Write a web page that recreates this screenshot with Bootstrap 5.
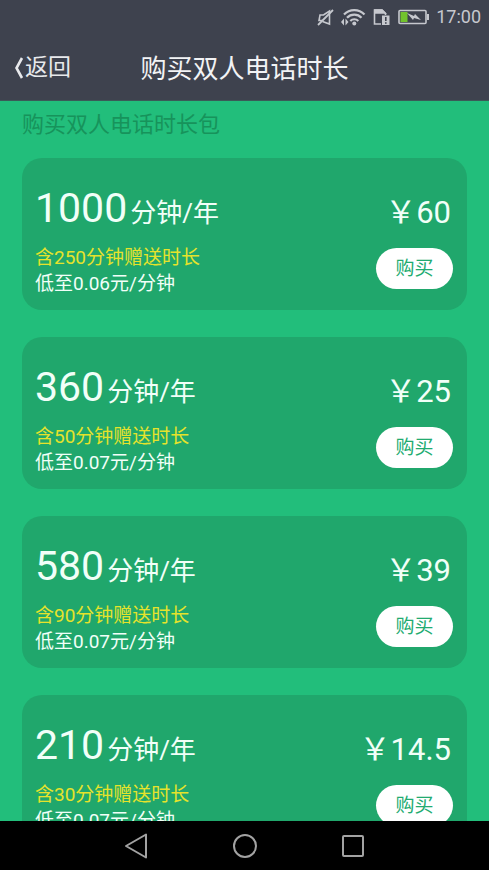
<!DOCTYPE html>
<html lang="zh-CN">
<head>
<meta charset="utf-8">
<meta name="viewport" content="width=device-width, initial-scale=1">
<title>购买双人电话时长</title>
<link rel="stylesheet" href="https://cdn.jsdelivr.net/npm/bootstrap@5.3.0/dist/css/bootstrap.min.css">
<style>
body { font-family: Roboto, "Noto Sans CJK SC", sans-serif; background: #22be7b; }
.topbar { background: #3e424e; color: #f2f3f5; border-bottom: 1px solid #3b5a58; }
.status { height: 34px; padding: 0 8px; gap: 7px; color: #c6c8ce; font-size: 18px; line-height: 34px; }
.titlebar { height: 66px; padding: 4px 14px 0; }
.titlebar .side { flex: 1 1 0; }
.back-link { font-size: 23px; line-height: 32px; color: #e8e9ec; }
.page-title { font-size: 26px; line-height: 36px; font-weight: 400; }
.plans { min-height: 0; padding: 0 22px; }
.section-title { font-size: 22px; line-height: 32px; margin: 8px 0 17px; color: #17935b; font-weight: 400; }
.plan-list { gap: 27px; }
.plan { height: 152px; flex: none; border-radius: 20px; background: #20a76c; color: #f1fff8; padding: 23px 14px 0 13px; }
.amount { font-size: 41px; line-height: 54px; }
.unit { font-size: 26px; margin-left: 3px; }
.cost { font-size: 31px; line-height: 54px; padding: 5px 2px 0 0; }
.detail { font-size: 19px; line-height: 26px; padding-top: 1px; }
.bonus { color: #e6e32b; }
.buy { width: 77px; height: 41px; background: #fff; color: #22ab70; font-size: 19px; line-height: 26px; padding: 0; }
.buy:hover { background: #effff7; color: #178a58; }
.sysnav { height: 49px; background: #000; gap: 80px; }
.sysnav button { width: 28px; height: 28px; }
</style>
<script src="https://cdn.jsdelivr.net/npm/bootstrap@5.3.0/dist/js/bootstrap.bundle.min.js"></script>
</head>
<body>
<div class="d-flex flex-column vh-100 overflow-hidden">
  <header class="topbar flex-shrink-0">
    <div class="status d-flex align-items-center justify-content-end">
      <svg width="17" height="18" viewBox="0 0 17 18" fill="none" stroke="currentColor" stroke-width="1.600" aria-hidden="true"><path d="M5.500 13.500 12.500 16V3L6.500 7H3L2 12.500h3.500"/><path d="M1 17 16 2" stroke-width="1.800"/></svg>
      <svg width="25" height="18" viewBox="0 0 25 18" fill="none" stroke="currentColor" stroke-width="2.200" aria-hidden="true"><path d="M3 6.500a14 14 0 0 1 20.500 0M6 9.800a10 10 0 0 1 14.500 0M9.300 13a5.500 5.500 0 0 1 8 0"/><circle cx="13.300" cy="15.500" r="2" fill="currentColor" stroke="none"/><path d="M0 14 3 10.500v7zM7.500 14 4.500 10.500v7z" fill="currentColor" stroke="none"/></svg>
      <svg width="18" height="18" viewBox="0 0 18 18" fill="none" stroke="currentColor" stroke-width="1.600" aria-hidden="true"><path d="M8 16H1.500V2H9l3.500 3.500V7"/><path d="M2 2h7l3 3H2z" fill="currentColor"/><path d="M9 7.500h7.500V17H9z" fill="currentColor" stroke="none"/><path d="M12.800 9v4m0 1.200v1.600" stroke="#3e424e"/></svg>
      <svg width="31" height="16" viewBox="0 0 31 16" aria-hidden="true"><rect x="1" y="1.500" width="27" height="13" rx="1" fill="none" stroke="currentColor" stroke-width="1.600"/><rect x="2.500" y="3" width="7" height="10" fill="#72c32c"/><path d="M29 5h2v6h-2z" fill="currentColor"/><path d="m9 4 7 3 1-2 6 6-7-2-1 2z" fill="currentColor"/></svg>
      <span>17:00</span>
    </div>
    <div class="titlebar d-flex align-items-center">
      <div class="side"><a href="#" class="back-link d-inline-flex align-items-center text-decoration-none"><svg width="11" height="22" viewBox="0 0 11 22" fill="none" stroke="currentColor" stroke-width="2.600" aria-hidden="true"><path d="M8 1 2.500 11 8 21"/></svg>返回</a></div>
      <h1 class="page-title m-0 text-nowrap">购买双人电话时长</h1>
      <div class="side"></div>
    </div>
  </header>
  <main class="plans flex-fill overflow-hidden">
    <h2 class="section-title">购买双人电话时长包</h2>
    <div class="plan-list d-flex flex-column">
      <section class="plan">
        <div class="d-flex justify-content-between"><div class="amount">1000<span class="unit">分钟/年</span></div><div class="cost">￥60</div></div>
        <div class="d-flex justify-content-between align-items-start pt-1"><div class="detail"><div class="bonus">含250分钟赠送时长</div><div>低至0.06元/分钟</div></div><button type="button" class="btn buy rounded-pill border-0 mt-1">购买</button></div>
      </section>
      <section class="plan">
        <div class="d-flex justify-content-between"><div class="amount">360<span class="unit">分钟/年</span></div><div class="cost">￥25</div></div>
        <div class="d-flex justify-content-between align-items-start pt-1"><div class="detail"><div class="bonus">含50分钟赠送时长</div><div>低至0.07元/分钟</div></div><button type="button" class="btn buy rounded-pill border-0 mt-1">购买</button></div>
      </section>
      <section class="plan">
        <div class="d-flex justify-content-between"><div class="amount">580<span class="unit">分钟/年</span></div><div class="cost">￥39</div></div>
        <div class="d-flex justify-content-between align-items-start pt-1"><div class="detail"><div class="bonus">含90分钟赠送时长</div><div>低至0.07元/分钟</div></div><button type="button" class="btn buy rounded-pill border-0 mt-1">购买</button></div>
      </section>
      <section class="plan">
        <div class="d-flex justify-content-between"><div class="amount">210<span class="unit">分钟/年</span></div><div class="cost">￥14.5</div></div>
        <div class="d-flex justify-content-between align-items-start pt-1"><div class="detail"><div class="bonus">含30分钟赠送时长</div><div>低至0.07元/分钟</div></div><button type="button" class="btn buy rounded-pill border-0 mt-1">购买</button></div>
      </section>
    </div>
  </main>
  <nav class="sysnav d-flex align-items-center justify-content-center flex-shrink-0" aria-label="系统导航">
    <button type="button" class="btn p-0 border-0 d-flex" aria-label="返回"><svg width="28" height="28" viewBox="0 0 28 28" fill="none" stroke="#a2a2a2" stroke-width="2"><path d="M23 2.500v23L3 14z" stroke-linejoin="round"/></svg></button>
    <button type="button" class="btn p-0 border-0 d-flex" aria-label="主页"><svg width="28" height="28" viewBox="0 0 28 28" fill="none" stroke="#a2a2a2" stroke-width="2"><circle cx="14" cy="14" r="11"/></svg></button>
    <button type="button" class="btn p-0 border-0 d-flex" aria-label="最近任务"><svg width="28" height="28" viewBox="0 0 28 28" fill="none" stroke="#a2a2a2" stroke-width="2"><rect x="4" y="4" width="20" height="20" rx="1"/></svg></button>
  </nav>
</div>
</body>
</html>
